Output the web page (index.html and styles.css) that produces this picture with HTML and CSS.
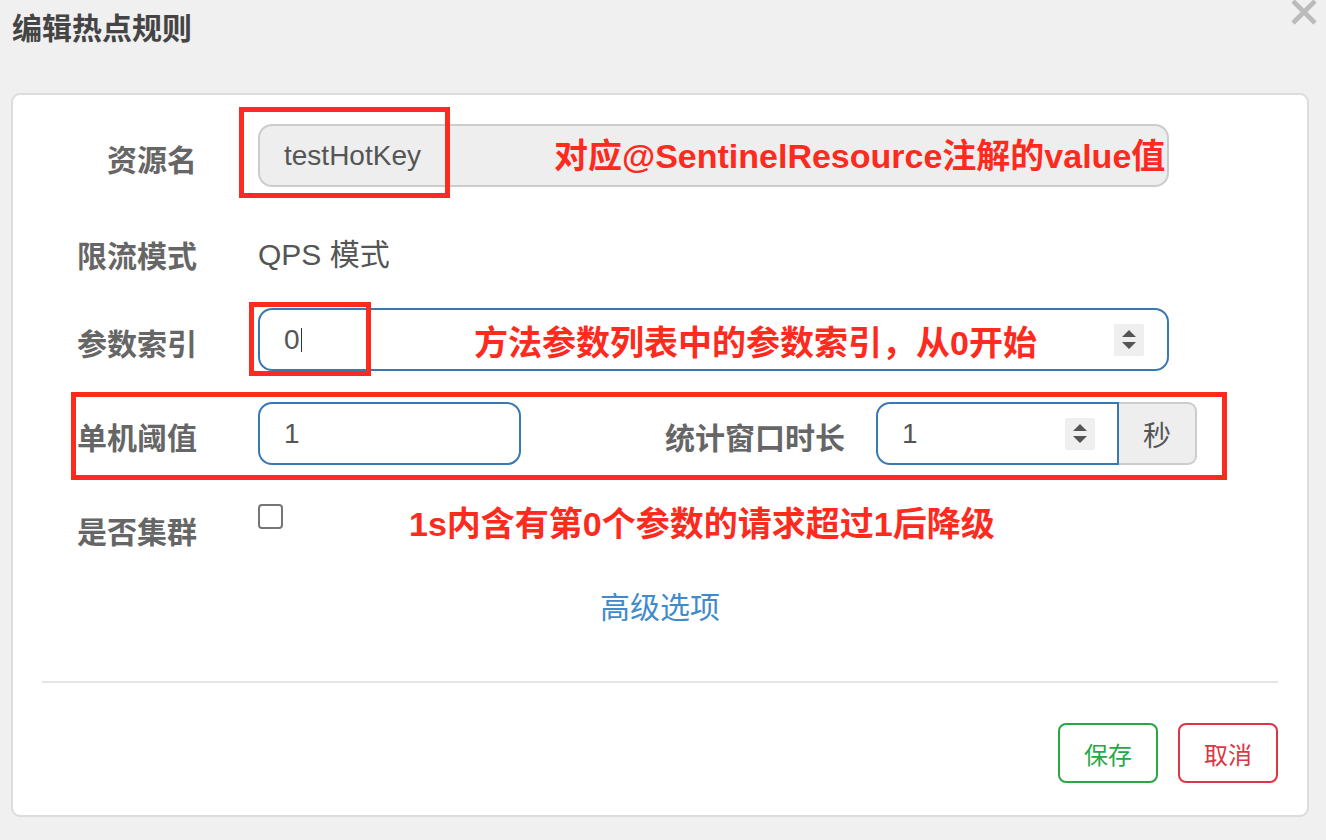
FILE: index.html
```html
<!DOCTYPE html>
<html lang="zh-CN">
<head>
<meta charset="utf-8">
<title>编辑热点规则</title>
<link rel="stylesheet" href="styles.css">
</head>
<body>
<div class="modal">
  <div class="modal-header">
    <h4 class="modal-title">编辑热点规则</h4>
    <span class="close" aria-label="关闭">
      <svg width="26" height="26" viewBox="0 0 26 26"><path d="M2 1 L24 23 M24 1 L2 23" stroke="#bbbbbb" stroke-width="4.6" fill="none"/></svg>
    </span>
  </div>
  <div class="modal-body">
    <div class="form-row">
      <div class="label">资源名</div>
      <div class="field readonly">
        <span class="value">testHotKey</span>
        <span class="note note-1">对应@SentinelResource注解的value值</span>
      </div>
    </div>
    <div class="form-row static-row">
      <div class="label">限流模式</div>
      <div class="static">QPS 模式</div>
    </div>
    <div class="form-row row-3">
      <div class="label">参数索引</div>
      <div class="field focus">
        <span class="value">0</span><span class="caret"></span>
        <span class="note note-3">方法参数列表中的参数索引，从0开始</span>
        <span class="spinner"><svg width="14" height="20" viewBox="0 0 14 20"><path d="M7 0 L14 7 L0 7 Z M0 12 L14 12 L7 19 Z" fill="#555"/></svg></span>
      </div>
    </div>
    <div class="form-row row-4">
      <div class="label">单机阈值</div>
      <div class="field focus short"><span class="value">1</span></div>
      <div class="label label-wide">统计窗口时长</div>
      <div class="input-group">
        <div class="field focus group-input">
          <span class="value">1</span>
          <span class="spinner"><svg width="14" height="20" viewBox="0 0 14 20"><path d="M7 0 L14 7 L0 7 Z M0 12 L14 12 L7 19 Z" fill="#555"/></svg></span>
        </div>
        <div class="addon">秒</div>
      </div>
    </div>
    <div class="form-row check-row">
      <div class="label">是否集群</div>
      <span class="checkbox"></span>
      <span class="note note-5">1s内含有第0个参数的请求超过1后降级</span>
    </div>
    <div class="advanced"><a class="adv-link">高级选项</a></div>
    <div class="divider"></div>
    <div class="footer">
      <button class="btn btn-save">保存</button>
      <button class="btn btn-cancel">取消</button>
    </div>

    <div class="mark mark-1"></div>
    <div class="mark mark-3"></div>
    <div class="mark mark-4"></div>
  </div>
</div>
</body>
</html>
```

FILE: styles.css
```css
* { box-sizing: border-box; }

body {
  margin: 0;
  background: #f0f0f0;
  font-family: "Liberation Sans", "Noto Sans CJK SC", sans-serif;
  color: #555;
}

.modal-header {
  height: 93px;
  padding: 11px 9px 0 12px;
  display: flex;
  justify-content: space-between;
  align-items: flex-start;
}

.modal-title {
  margin: 0;
  font-size: 30px;
  line-height: 30px;
  font-weight: bold;
  color: #444;
  font-family: "Noto Sans CJK SC", sans-serif;
}

.close {
  display: block;
  width: 26px;
  height: 26px;
  margin-top: -11px;
}

.modal-body {
  position: relative;
  margin: 0 17px 0 11px;
  background: #fff;
  border: 2px solid #dcdcdc;
  border-radius: 9px;
  padding: 29px 29px 32px;
}

.form-row {
  display: flex;
  align-items: center;
  height: 63px;
  margin-bottom: 29px;
}

.label {
  width: 155px;
  margin-right: 61px;
  text-align: right;
  font-family: "Noto Sans CJK SC", sans-serif;
  font-weight: bold;
  font-size: 30px;
  line-height: 40px;
  color: #666;
  padding-top: 5px;
}

.field {
  position: relative;
  width: 911px;
  height: 63px;
  border: 2px solid #cccccc;
  border-radius: 14px;
  display: flex;
  align-items: center;
  padding: 0 23px 0 24px;
  font-size: 28px;
  color: #555;
  background: #fff;
}

.field.readonly { background: #eeeeee; }
.field.focus { border-color: #3a78b4; }

.value { line-height: 32px; }

.caret {
  display: inline-block;
  width: 1px;
  height: 24px;
  background: #333;
  margin-left: 1px;
}

.spinner {
  margin-left: auto;
  width: 30px;
  height: 32px;
  background: #efefef;
  border-radius: 2px;
  display: flex;
  align-items: center;
  justify-content: center;
}

.note {
  color: #fd2a1e;
  font-weight: bold;
  font-size: 34px;
  line-height: 40px;
  white-space: nowrap;
}

.note-1, .note-3 {
  position: absolute;
  top: 0;
  bottom: 0;
  display: flex;
  align-items: center;
}
.note-1 { left: 294px; }
.note-3 { left: 214px; padding-top: 6px; }

.static-row { align-items: flex-start; }
.static-row .label { padding-top: 18px; }
.static {
  font-size: 30px;
  line-height: 40px;
  padding-top: 19px;
  color: #555;
}

.row-3 { margin-bottom: 31px; }
.row-4 { margin-bottom: 30px; }
.field.short { width: 263px; }
.label-wide {
  width: 324px;
  margin-right: 31px;
}

.input-group {
  display: flex;
  width: 321px;
  height: 63px;
}
.field.group-input {
  width: 243px;
  border-radius: 14px 0 0 14px;
  padding-right: 22px;
}
.addon {
  width: 78px;
  height: 63px;
  background: #eeeeee;
  border: 2px solid #cccccc;
  border-left: none;
  border-radius: 0 9px 9px 0;
  display: flex;
  align-items: center;
  justify-content: center;
  font-family: "Noto Sans CJK SC", sans-serif;
  font-size: 28px;
  color: #555;
}

.check-row {
  height: auto;
  align-items: flex-start;
  margin-bottom: 0;
}
.check-row .label { padding-top: 15px; }
.checkbox {
  width: 25px;
  height: 25px;
  margin-top: 9px;
  border: 2px solid #767676;
  border-radius: 4px;
  background: #fff;
}
.note-5 {
  margin-left: 126px;
  margin-top: 9px;
}

.advanced {
  margin-top: 35px;
  text-align: center;
  line-height: 40px;
}
.adv-link {
  font-family: "Noto Sans CJK SC", sans-serif;
  font-size: 30px;
  color: #428bca;
  text-decoration: none;
}

.divider {
  margin-top: 48px;
  height: 2px;
  background: #e5e5e5;
}

.footer {
  margin-top: 40px;
  display: flex;
  justify-content: flex-end;
  gap: 20px;
}
.btn {
  width: 100px;
  height: 60px;
  background: #fff;
  border: 2px solid;
  border-radius: 8px;
  font-family: "Noto Sans CJK SC", sans-serif;
  font-size: 24px;
  padding: 0;
}
.btn-save { border-color: #28a745; color: #28a745; }
.btn-cancel { border-color: #dc3545; color: #dc3545; }

.mark {
  position: absolute;
  border: 5px solid #fd2a1e;
}
.mark-1 { left: 226px; top: 12px; width: 211px; height: 91px; }
.mark-3 { left: 236px; top: 207px; width: 122px; height: 74px; }
.mark-4 { left: 58px; top: 297px; width: 1156px; height: 88px; }
```
